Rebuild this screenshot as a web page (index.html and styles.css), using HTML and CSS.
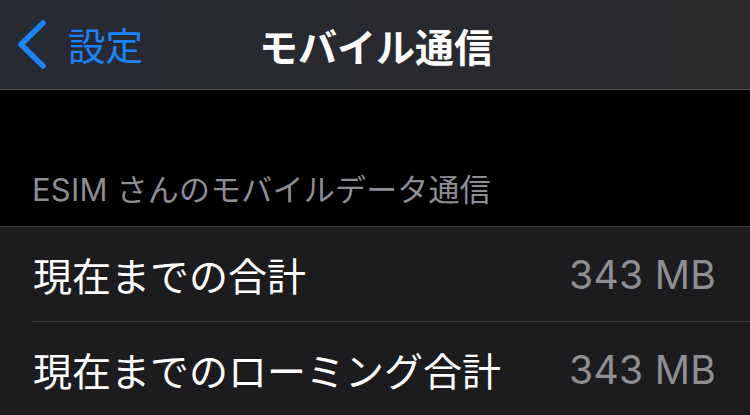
FILE: index.html
```html
<!DOCTYPE html>
<html lang="ja">
<head>
<meta charset="utf-8">
<link rel="stylesheet" href="styles.css">
</head>
<body>
<div class="screen">
  <header class="nav">
    <div class="back">
      <svg class="chev" width="32" height="50" viewBox="0 0 32 50"><path d="M27 3 L5 24.5 L27 46" fill="none" stroke="#1a84ff" stroke-width="5.5" stroke-linecap="round" stroke-linejoin="round"/></svg>
      <span class="back-label">設定</span>
    </div>
    <h1 class="title">モバイル通信</h1>
  </header>
  <div class="gap">
    <div class="section-header">ESIM さんのモバイルデータ通信</div>
  </div>
  <div class="group">
    <div class="row">
      <span class="label">現在までの合計</span>
      <span class="value">343 MB</span>
    </div>
    <div class="row">
      <span class="label">現在までのローミング合計</span>
      <span class="value">343 MB</span>
    </div>
  </div>
</div>
</body>
</html>
```

FILE: styles.css
```css
html, body {
  margin: 0;
  padding: 0;
  background: #000;
}
body {
  width: 750px;
  height: 415px;
  overflow: hidden;
  font-family: "Noto Sans CJK JP", "Noto Sans", sans-serif;
}
.screen {
  display: flex;
  flex-direction: column;
}
.nav {
  height: 89px;
  border-bottom: 1px solid #4b4b4e;
  background: linear-gradient(90deg, #272a30 0%, #282a2f 50%, #2a2a2c 100%);
  position: relative;
  display: flex;
  align-items: center;
}
.back {
  display: flex;
  align-items: center;
  padding-left: 16px;
  gap: 20px;
  height: 100%;
}
.chev {
  display: block;
}
.back-label {
  color: #1a84ff;
  font-size: 37.5px;
  line-height: 1;
  margin-top: -2px;
}
.title {
  position: absolute;
  left: 0;
  right: 0;
  top: 0;
  bottom: 0;
  margin: 0;
  display: flex;
  align-items: center;
  justify-content: center;
  color: #fff;
  font-size: 39px;
  font-weight: 700;
  line-height: 1;
  padding-left: 2px;
  padding-top: 2px;
}
.gap {
  height: 136px;
  background: #000;
  display: flex;
  align-items: flex-end;
}
.section-header {
  color: #8d8d93;
  font-family: "Inter", "Noto Sans CJK JP", sans-serif;
  font-size: 31px;
  line-height: 1;
  padding-left: 32px;
  padding-bottom: 21px;
  letter-spacing: 0.2px;
}
.group {
  background: #1c1c1e;
  border-top: 1px solid #3d3d40;
}
.row {
  height: 94px;
  display: flex;
  align-items: center;
  justify-content: space-between;
  padding: 0 34px 0 33px;
}
.row + .row {
  border-top: 1px solid #3a3a3c;
  margin-left: 32px;
  padding-left: 1px;
}
.label {
  color: #fff;
  font-size: 39px;
  line-height: 1;
}
.value {
  color: #8e8e93;
  font-family: "Inter", "Noto Sans", sans-serif;
  font-size: 39px;
  line-height: 1;
  letter-spacing: 0.3px;
}
```
